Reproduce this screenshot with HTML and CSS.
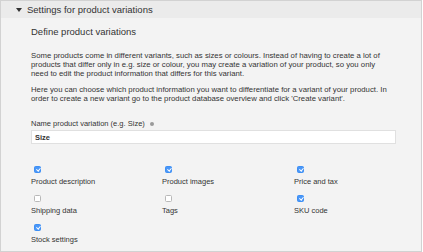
FILE: index.html
```html
<!DOCTYPE html>
<html lang="en">
<head>
  <meta charset="UTF-8">
  <title>Settings for product variations</title>
  <link rel="stylesheet" href="styles.css">
</head>
<body>

  <div class="panel">
    <div class="panel-header">
      <span class="caret"></span>
      Settings for product variations
    </div>

    <div class="panel-body">
      <h3>Define product variations</h3>

      <p>Some products come in different variants, such as sizes or colours. Instead of having to create a lot of products that differ only in e.g. size or colour, you may create a variation of your product, so you only need to edit the product information that differs for this variant.</p>

      <p>Here you can choose which product information you want to differentiate for a variant of your product. In order to create a new variant go to the product database overview and click 'Create variant'.</p>

      <label class="field-label">Name product variation (e.g. Size) <span class="info"></span></label>
      <input type="text" class="text-input" value="Size">

      <!-- which fields differ per variant -->
      <div class="options">
        <div class="option"><span class="check on"></span>Product description</div>
        <div class="option"><span class="check on"></span>Product images</div>
        <div class="option"><span class="check on"></span>Price and tax</div>
        <div class="option"><span class="check"></span>Shipping data</div>
        <div class="option"><span class="check"></span>Tags</div>
        <div class="option"><span class="check on"></span>SKU code</div>
        <div class="option"><span class="check on"></span>Stock settings</div>
      </div>
    </div>
  </div>

</body>
</html>
```

FILE: styles.css
```css
body {
  margin: 0;
  font-family: 'Liberation Sans', Arial, sans-serif;
  color: #333;
  background-color: #fff;
}

.panel {
  width: 420px;
  height: 250px;
  border: 1px solid #d2d2d2;
  background-color: #f3f3f3;
  overflow: hidden;
}

.panel-header {
  height: 17px;
  padding-left: 15px;
  font-size: 9.5px;
  background-color: #ebebeb;
  display: flex;
  align-items: center;
}

.caret {
  width: 0;
  height: 0;
  border-left: 3px solid transparent;
  border-right: 3px solid transparent;
  border-top: 4px solid #333;
  margin-right: 5px;
}

.panel-body {
  padding: 8px 0 0 30px;
}

h3 {
  font-size: 9.5px;
  font-weight: normal;
  margin: 0 0 13px 0;
  line-height: 12px;
}

p {
  width: 362px;
  font-size: 7.75px;
  line-height: 9px;
  margin: 0 0 7px 0;
}

.field-label {
  display: block;
  font-size: 7.5px;
  line-height: 10px;
  margin-top: 16px;
}

.info {
  display: inline-block;
  width: 4px;
  height: 4px;
  border-radius: 50%;
  background-color: #9a9a9a;
  margin-left: 3px;
  vertical-align: 0;
}

.text-input {
  display: block;
  box-sizing: border-box;
  width: 365px;
  height: 14px;
  margin-top: 1px;
  padding: 0 3px;
  border: 1px solid #e0e0e0;
  background-color: #fff;
  font-family: inherit;
  font-size: 7.5px;
  font-weight: bold;
  color: #333;
}

.options {
  display: grid;
  grid-template-columns: 131px 132px 131px;
  row-gap: 8px;
  margin-top: 22px;
}

.option {
  font-size: 7.5px;
  line-height: 10px;
}

.check {
  display: block;
  box-sizing: border-box;
  width: 7px;
  height: 7px;
  margin: 0 0 4px 3px;
  border: 1px solid #b8b8b8;
  border-radius: 1.5px;
  background-color: #fff;
  position: relative;
}

.check.on {
  border-color: #3d8ff5;
  background-color: #4a97f7;
}

.check.on::after {
  content: "";
  position: absolute;
  left: 1.5px;
  top: 0;
  width: 1.5px;
  height: 3px;
  border-right: 1px solid #fff;
  border-bottom: 1px solid #fff;
  transform: rotate(40deg);
}
```
